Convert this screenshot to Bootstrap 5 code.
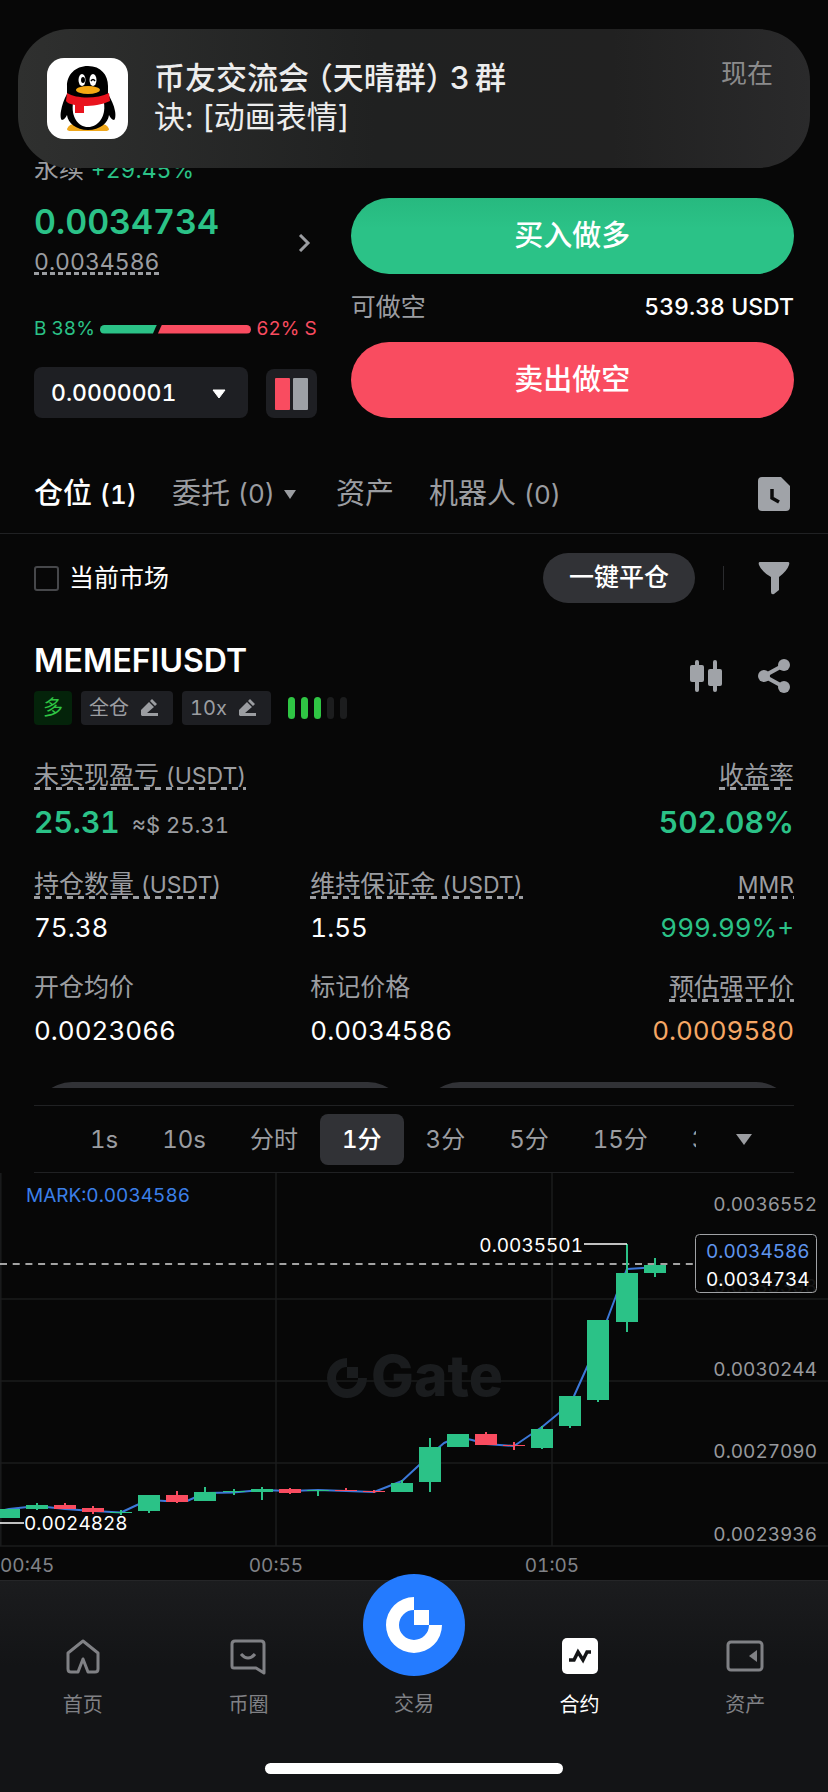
<!DOCTYPE html>
<html lang="zh-CN" data-bs-theme="dark">
<head>
<meta charset="utf-8">
<meta name="viewport" content="width=device-width, initial-scale=1">
<title>MEMEFIUSDT 合约</title>
<link href="https://cdn.jsdelivr.net/npm/bootstrap@5.3.0/dist/css/bootstrap.min.css" rel="stylesheet">
<script src="https://cdn.jsdelivr.net/npm/bootstrap@5.3.0/dist/js/bootstrap.bundle.min.js" defer></script>
<style>
  :root { --up: #2bc287; --down: #f94c60; --muted-ink: #9b9da1; --rule: #202123; --chip: #1e1f23; }
  body { background: #070707; color: #fff; font-family: Inter, "Noto Sans CJK SC", sans-serif; font-size: 25px; line-height: 36px; font-variant-numeric: tabular-nums; }
  button, select { font-family: inherit; font-variant-numeric: inherit; }
  svg { display: block; flex: none; }
  .page-pad { padding-left: 34px; padding-right: 34px; }
  .plain { background: none; border: 0; padding: 0; color: inherit; }
  .up { color: var(--up); }
  .down { color: var(--down); }
  .dim { color: var(--muted-ink); }
  .num { font-size: 23px; line-height: 1; }

  .notice { position: absolute; top: 29px; left: 18px; right: 18px; height: 139px; border-radius: 52px; padding: 29px 37px 0 29px; gap: 26px; background: linear-gradient(90deg, #2f302f, #202121 45%, #212121 75%, #2a2a2b); color: #ededed; z-index: 2; }
  .notice-title { font-size: 31px; font-weight: 500; line-height: 39px; font-feature-settings: "halt"; }
  .notice-text { font-size: 31px; line-height: 39px; }
  .notice-time { font-size: 26px; line-height: 32px; color: #8b8b8c; }

  .order { display: grid; grid-template-columns: 37fr 58fr; column-gap: 34px; align-items: end; padding-top: 153px; }
  .pair { line-height: 32px; }
  .price { font-size: 34px; line-height: 44px; font-weight: 600; margin-top: 15px; }
  .dashed { display: block; width: fit-content; background: repeating-linear-gradient(90deg, currentColor 0 6px, transparent 6px 11px) left bottom 3px / 100% 3px no-repeat; }
  .mark-price { font-size: 23px; line-height: 30px; margin-top: 3px; background: repeating-linear-gradient(90deg, currentColor 0 5px, transparent 5px 8px) left bottom 2px / 100% 3px no-repeat; }
  .depth { font-size: 19px; line-height: 24px; gap: 5px; margin-top: 40px; }
  .depth-bar { height: 9px; gap: 1px; }
  .depth-buy { background: var(--up); border-radius: 5px 0 0 5px; clip-path: polygon(0 0, 100% 0, calc(100% - 4px) 100%, 0 100%); }
  .depth-sell { background: var(--down); border-radius: 0 5px 5px 0; clip-path: polygon(4px 0, 100% 0, 100% 100%, 0 100%); }
  .step-row { margin-top: 26px; gap: 18px; }
  .step-box { position: relative; }
  .step-box select { appearance: none; width: 100%; height: 51px; border: 0; border-radius: 8px; background: var(--chip); color: #fff; font-size: 23px; font-weight: 500; padding: 0 17px; }
  .step-box svg { position: absolute; right: 22px; top: 22px; pointer-events: none; }
  .book-btn { width: 51px; height: 49px; border-radius: 8px; background: var(--chip); }
  .trade-btn { --bs-btn-color: #fff; height: 76px; font-size: 29px; font-weight: 500; border: 0; }
  .trade-buy { background: linear-gradient(#27b97f, var(--up) 40%); }
  .trade-sell { background: var(--down); }
  .quota-row { margin: 15px 0 17px; }
  .quota { font-size: 23px; font-weight: 500; }

  .tab-bar { padding-top: 56px; padding-bottom: 19px; border-bottom: 1px solid var(--rule); font-size: 29px; line-height: 40px; gap: 35px; }
  .tab-bar .num { font-size: 26px; }
  .tab-bar .active { color: #fff; font-weight: 500; }
  .filter-bar { padding-top: 19px; }
  .only-market { gap: 10px; }
  .filter-bar .form-check-input { width: 25px; height: 25px; margin: 0; background-color: transparent; border: 2px solid #46474a; border-radius: 3px; }
  .close-all { height: 50px; padding: 0 26px; background: #313236; --bs-btn-color: #fff; font-size: 25px; font-weight: 500; border: 0; }
  .v-rule { width: 1px; height: 24px; background: #2a2b2e; margin: 0 34px 0 28px; }

  .position-head { padding-top: 40px; }
  .symbol { font-size: 32px; line-height: 36px; font-weight: 600; margin: 0; }
  .chips { margin-top: 12px; gap: 9px; }
  .chip { height: 34px; border-radius: 4px; background: var(--chip); font-size: 20px; line-height: 34px; color: var(--muted-ink); }
  .chip svg { margin: 0 6px 0 12px; }
  .chip-long { background: #04230a; color: #2fc544; padding: 0 9px; }
  .level { gap: 6px; }
  .level i { width: 7px; height: 22px; border-radius: 4px; background: #1c1d1e; }
  .level i.on { background: #2fc544; }
  .head-icons { gap: 36px; }

  .pnl { padding-top: 32px; }
  .stats { display: grid; grid-template-columns: 4fr 4fr 3fr; padding-top: 26px; }
  .stats + .stats { padding-top: 23px; }
  dl { margin: 0; }
  dt { font-weight: 400; color: var(--muted-ink); }
  dd { margin: 8px 0 0; font-size: 26px; }
  dl:last-child { text-align: right; }
  dl:last-child .dashed { margin-left: auto; }
  dd.total { font-size: 30px; font-weight: 600; margin-top: 11px; }
  .approx { font-size: 22px; line-height: 1; font-weight: 400; }
  .warn { color: #f6a765; }
  .peek { height: 6px; overflow: hidden; margin-top: 33px; gap: 16px; }
  .peek div { height: 76px; border-radius: 38px; background: #313236; }
  .intervals { margin: 17px 34px 0; border-top: 1px solid var(--rule); border-bottom: 1px solid var(--rule); padding: 8px 0 7px; }
  .interval-list { padding-left: 34px; overflow: hidden; margin-right: 98px; }
  .interval-list .btn { height: 51px; flex: none; padding: 0 22px; border: 0; font-size: 24px; border-radius: 8px; color: var(--muted-ink); line-height: 51px; }
  .interval-list .btn.active { background: #313236; color: #fff; font-weight: 500; }
  .more { position: absolute; right: 42px; top: 22px; }
  .chart { width: 100%; height: auto; font-size: 19px; }

  .dock { flex: 1; background: linear-gradient(#1b1c1e, #131416 40%); border-top: 1px solid #252628; font-size: 20px; line-height: 28px; }
  .dock-item { flex: 1 0 0; text-decoration: none; color: #808185; padding-top: 56px; gap: 16px; }
  .dock-item.active { color: #fff; }
  .dock-item.trade { padding-top: 0; margin-top: -7px; gap: 14px; }
  .home-bar { width: 36%; height: 11px; border-radius: 6px; background: #fff; margin: 44px auto 0; }
</style>
</head>
<body class="min-vh-100 d-flex flex-column position-relative">

<aside class="notice d-flex">
  <svg width="81" height="81" viewBox="0 0 81 81" aria-hidden="true">
    <rect width="81" height="81" rx="17" fill="#fff"/>
    <path d="M20 71q2-6 12-5l9 1 9-1q10-1 12 5 0 2-4 2H24q-4 0-4-2z" fill="#f0a81c"/>
    <path d="M41 8c13 0 20 9 20 20v8c3 5 6 11 7 17 1 5 0 9-1 9-2 0-4-3-5-5-1 8-9 15-21 15s-20-7-21-15c-1 2-3 5-5 5-1 0-2-4-1-9 1-6 3-12 6-17v-8C20 17 28 8 41 8z" fill="#000"/>
    <path d="M26 45c-2 14 5 24 15 24s18-10 16-24z" fill="#fff"/>
    <ellipse cx="35" cy="22" rx="3.500" ry="6" fill="#fff"/><ellipse cx="46" cy="22" rx="3.500" ry="6" fill="#fff"/>
    <ellipse cx="36" cy="22" rx="2" ry="3"/><path d="M44 23q2-3 4 0" fill="none" stroke="#000" stroke-width="1.5"/>
    <ellipse cx="41" cy="32" rx="12" ry="4" fill="#f5a813"/>
    <path d="M20 35c10 6 30 6 42 0l1 8c-8 4-18 5-26 5v7h-9v-8c-5-1-8-2-9-4z" fill="#e9131d"/>
  </svg>
  <div class="flex-grow-1">
    <div class="notice-title">币友交流会 （天晴群） 3&thinsp;群</div>
    <div class="notice-text">诀: [动画表情]</div>
  </div>
  <div class="notice-time">现在</div>
</aside>

<main>
  <section class="order page-pad">
    <div>
      <div class="pair dim">永续 <span class="num up">+29.45%</span></div>
      <div class="d-flex justify-content-between align-items-center">
        <div>
          <div class="price up">0.0034734</div>
          <div class="dashed mark-price dim">0.0034586</div>
        </div>
        <button class="plain dim mt-4 me-1" aria-label="行情"><svg width="16" height="18" viewBox="0 0 16 18"><path d="M3 1l8 8-8 8" fill="none" stroke="currentColor" stroke-width="3"/></svg></button>
      </div>
      <div class="depth d-flex align-items-center">
        <span class="up">B 38%</span>
        <div class="depth-bar d-flex flex-grow-1"><div class="depth-buy" style="width:38%"></div><div class="depth-sell" style="width:62%"></div></div>
        <span class="down">62% S</span>
      </div>
      <div class="step-row d-flex align-items-end">
        <div class="step-box flex-grow-1">
          <select aria-label="价格精度"><option>0.0000001</option></select>
          <svg width="14" height="10" viewBox="0 0 14 10"><path d="M1 1h12L7 9z" fill="#fff" stroke="#fff" stroke-linejoin="round"/></svg>
        </div>
        <button class="plain book-btn d-flex justify-content-center align-items-center" aria-label="盘口样式"><svg width="33" height="32" viewBox="0 0 33 32"><rect width="15" height="32" rx="1" fill="#f94c60"/><rect x="18" width="15" height="32" rx="1" fill="#9da1a6"/></svg></button>
      </div>
    </div>
    <div>
      <button class="btn trade-btn trade-buy rounded-pill w-100">买入做多</button>
      <div class="quota-row d-flex justify-content-between"><span class="dim">可做空</span><span class="quota">539.38 USDT</span></div>
      <button class="btn trade-btn trade-sell rounded-pill w-100">卖出做空</button>
    </div>
  </section>

  <nav class="tab-bar page-pad d-flex align-items-center dim">
    <button class="plain active">仓位 <span class="num">(1)</span></button>
    <button class="plain d-flex align-items-center me-1">委托&nbsp;<span class="num">(0)</span><svg class="ms-2" width="14" height="11" viewBox="0 0 14 11"><path d="M1 1h12L7 10z" fill="currentColor"/></svg></button>
    <button class="plain">资产</button>
    <button class="plain">机器人 <span class="num">(0)</span></button>
    <button class="plain ms-auto me-1" aria-label="历史记录"><svg width="32" height="34" viewBox="0 0 32 34"><path d="M4 0h19l9 9v21q0 4-4 4H4q-4 0-4-4V4q0-4 4-4z" fill="#a0a3a8"/><path d="M14 12v9l7 4" fill="none" stroke="#0b0b0b" stroke-width="3.5"/></svg></button>
  </nav>

  <section class="filter-bar page-pad d-flex align-items-center">
    <div class="only-market d-flex align-items-center">
      <input class="form-check-input" type="checkbox" id="only-market">
      <label for="only-market">当前市场</label>
    </div>
    <button class="btn close-all rounded-pill ms-auto">一键平仓</button>
    <span class="v-rule"></span>
    <button class="plain me-1" aria-label="筛选"><svg width="32" height="34" viewBox="0 0 32 34"><path d="M2 1h28q2 0 1 3-2 6-10 12v13l-5 4q-3 1-3-2V16Q3 10 1 4 0 1 2 1z" fill="#a0a3a8"/></svg></button>
  </section>

  <article class="page-pad">
    <header class="position-head d-flex justify-content-between">
      <div>
        <h2 class="symbol">MEMEFIUSDT</h2>
        <div class="chips d-flex align-items-center">
          <span class="chip chip-long">多</span>
          <button class="plain chip d-flex align-items-center px-2">全仓<svg width="18" height="18" viewBox="0 0 18 18"><path d="M0 16v-5l8-8 5 5-7 6h11v3H1zM9 2l2-2 5 5-2 2z" fill="currentColor"/></svg></button>
          <button class="plain chip d-flex align-items-center px-2">10x<svg width="18" height="18" viewBox="0 0 18 18"><path d="M0 16v-5l8-8 5 5-7 6h11v3H1zM9 2l2-2 5 5-2 2z" fill="currentColor"/></svg></button>
          <span class="level d-flex ps-2"><i class="on"></i><i class="on"></i><i class="on"></i><i></i><i></i></span>
        </div>
      </div>
      <div class="head-icons d-flex align-items-start pt-3 me-1">
        <button class="plain" aria-label="K线"><svg width="32" height="34" viewBox="0 0 32 34" fill="#a0a3a8"><rect y="6" width="14" height="17" rx="2"/><rect x="5" y="1" width="4" height="32" rx="2"/><rect x="18" y="10" width="14" height="17" rx="2"/><rect x="23" y="1" width="4" height="32" rx="2"/></svg></button>
        <button class="plain" aria-label="分享"><svg width="32" height="34" viewBox="0 0 32 34" fill="#a0a3a8"><path d="M26 6L6 17l20 11" fill="none" stroke="#a0a3a8" stroke-width="4"/><circle cx="26" cy="6" r="6"/><circle cx="6" cy="17" r="6"/><circle cx="26" cy="28" r="6"/></svg></button>
      </div>
    </header>

    <div class="pnl d-flex justify-content-between">
      <dl><dt class="dashed">未实现盈亏 <span class="num">(USDT)</span></dt><dd class="total up">25.31 <span class="approx dim ms-1">≈$ 25.31</span></dd></dl>
      <dl><dt class="dashed">收益率</dt><dd class="total up">502.08%</dd></dl>
    </div>
    <div class="stats">
      <dl><dt class="dashed">持仓数量 <span class="num">(USDT)</span></dt><dd>75.38</dd></dl>
      <dl><dt class="dashed">维持保证金 <span class="num">(USDT)</span></dt><dd>1.55</dd></dl>
      <dl><dt class="dashed"><span class="num">MMR</span></dt><dd class="up">999.99%+</dd></dl>
    </div>
    <div class="stats">
      <dl><dt>开仓均价</dt><dd>0.0023066</dd></dl>
      <dl><dt>标记价格</dt><dd>0.0034586</dd></dl>
      <dl><dt class="dashed">预估强平价</dt><dd class="warn">0.0009580</dd></dl>
    </div>
    <div class="peek d-flex" aria-hidden="true"><div class="flex-fill"></div><div class="flex-fill"></div></div>
  </article>

  <div class="intervals position-relative">
    <div class="interval-list d-flex">
      <button class="btn">1s</button><button class="btn">10s</button><button class="btn">分时</button><button class="btn active">1分</button><button class="btn">3分</button><button class="btn">5分</button><button class="btn">15分</button><button class="btn">30分</button>
    </div>
    <button class="plain dim more" aria-label="更多周期"><svg width="16" height="22" viewBox="0 0 16 22"><path d="M0 6h16L8 17z" fill="currentColor"/></svg></button>
  </div>

  <svg class="chart" viewBox="0 0 828 407" role="img" aria-label="1分钟K线图">
    <g stroke="#1b1c1d" stroke-width="1.5">
      <path d="M0 126H828M0 208H828M0 290H828M0 373H828M.8 0V373M276 0V373M552 0V373"/>
    </g>
    <g fill="#1a1c1e">
      <path d="M347 185v9a11 11 0 1 0 11 11h9a20 20 0 1 1-20-20z"/><rect x="347" y="194" width="11" height="11"/>
      <text x="371" y="223" font-size="57" font-weight="800">Gate</text>
    </g>
    <path d="M0 338L9 336 37 333 65 336 93 338 121 339.500 137 332 149 327 165 328 187 328 205 320 233 319.500 261 317 290 318 318 317 374 319 402 308 430 282 444 270 458 264 472 267 486 271 514 273 542 254 559 240 570 228 574 223 588 192 598 170 607 147 616 123 627 96 643 95 655 94" fill="none" stroke="#3c78d8" stroke-width="2" stroke-linejoin="round"/>
    <path d="M0 91H695" stroke="#d8d8d8" stroke-width="1.500" stroke-dasharray="7 5.700"/>
    <g id="candles"></g>
    <path d="M0 350H24M584 71H627" stroke="#fff" stroke-width="1.500"/>
    <g fill="#fff"><text x="24" y="357">0.0024828</text><text x="583" y="79" text-anchor="end">0.0035501</text></g>
    <text x="26" y="29" fill="#3b7fe8">MARK:0.0034586</text>
    <g fill="#97999d" text-anchor="end">
      <text x="817" y="38">0.0036552</text><text x="817" y="120" opacity=".25">0.0033398</text><text x="817" y="203">0.0030244</text><text x="817" y="285">0.0027090</text><text x="817" y="368">0.0023936</text>
    </g>
    <rect x="695.500" y="61.500" width="121" height="58" rx="4" fill="#070707" fill-opacity=".6" stroke="#a0a2a5"/>
    <text x="706" y="85" fill="#5f95ee">0.0034586</text><text x="706" y="113" fill="#fff">0.0034734</text>
    <g fill="#808287"><text x="0" y="399">00:45</text><text x="276" y="399" text-anchor="middle">00:55</text><text x="552" y="399" text-anchor="middle">01:05</text></g>
  </svg>
</main>

<footer class="dock">
  <nav class="d-flex align-items-start text-center">
    <a class="dock-item d-flex flex-column align-items-center" href="#"><svg width="38" height="38" viewBox="0 0 38 38" fill="none" stroke="currentColor" stroke-width="3" stroke-linejoin="round"><path d="M19 4L4 16v16q0 3 3 3h7l5-13 5 13h7q3 0 3-3V16z"/></svg>首页</a>
    <a class="dock-item d-flex flex-column align-items-center" href="#"><svg width="38" height="38" viewBox="0 0 38 38" fill="none" stroke="currentColor" stroke-width="3" stroke-linejoin="round"><path d="M35 36l-8-5H5q-2 0-2-2V7q0-3 3-3h26q3 0 3 3zM12 17q7 8 14 0"/></svg>币圈</a>
    <a class="dock-item trade d-flex flex-column align-items-center" href="#"><svg width="102" height="102" viewBox="0 0 102 102"><circle cx="51" cy="51" r="51" fill="#247bff"/><path d="M51 23v13a15 15 0 1 0 15 15h13a28 28 0 1 1-28-28z" fill="#fff"/><path d="M51 36h15v15H51z" fill="#fff"/></svg>交易</a>
    <a class="dock-item active d-flex flex-column align-items-center" href="#"><svg width="38" height="38" viewBox="0 0 38 38"><rect x="1" y="1" width="36" height="36" rx="5" fill="#fff"/><path d="M8 23h5l4-8 5 8 4-8h4" fill="none" stroke="#131416" stroke-width="3.500"/></svg>合约</a>
    <a class="dock-item d-flex flex-column align-items-center" href="#"><svg width="38" height="38" viewBox="0 0 38 38"><rect x="2" y="5" width="34" height="28" rx="3" fill="none" stroke="currentColor" stroke-width="3"/><path d="M31 13v12l-8-6z" fill="currentColor"/></svg>资产</a>
  </nav>
  <div class="home-bar"></div>
</footer>

<script>
  // Each candle: [body top, body bottom, wick top, wick bottom, rising]
  const candles = [
    [336,345,336,345,1],[332,336,330,337,1],[332,336,330,336,0],[335,339,333,341,0],[339,340,337,342,1],[322,338,322,340,1],
    [322,329,318,330,0],[319,328,314,328,1],[318,319,316,322,1],[316,319,314,327,1],[316,320,315,321,0],[317,318,317,323,1],
    [317,318,315,318,0],[318,319,317,320,0],[310,319,307,319,1],[274,309,265,319,1],[261,274,261,274,1],[261,272,259,272,0],
    [272,273,269,277,0],[256,275,253,276,1],[223,253,223,255,1],[147,227,147,229,1],[100,149,71,159,1],[92,100,85,104,1]
  ];
  document.getElementById('candles').innerHTML = candles.map(([t, b, wt, wb, up], i) => {
    const x = Math.round(9 + i * 28.07);
    return `<g fill="${up ? '#2bc287' : '#f94c60'}"><rect x="${x - 11}" y="${t}" width="22" height="${b - t}"/><rect x="${x - 1}" y="${wt}" width="2" height="${wb - wt}"/></g>`;
  }).join('');
</script>
</body>
</html>
